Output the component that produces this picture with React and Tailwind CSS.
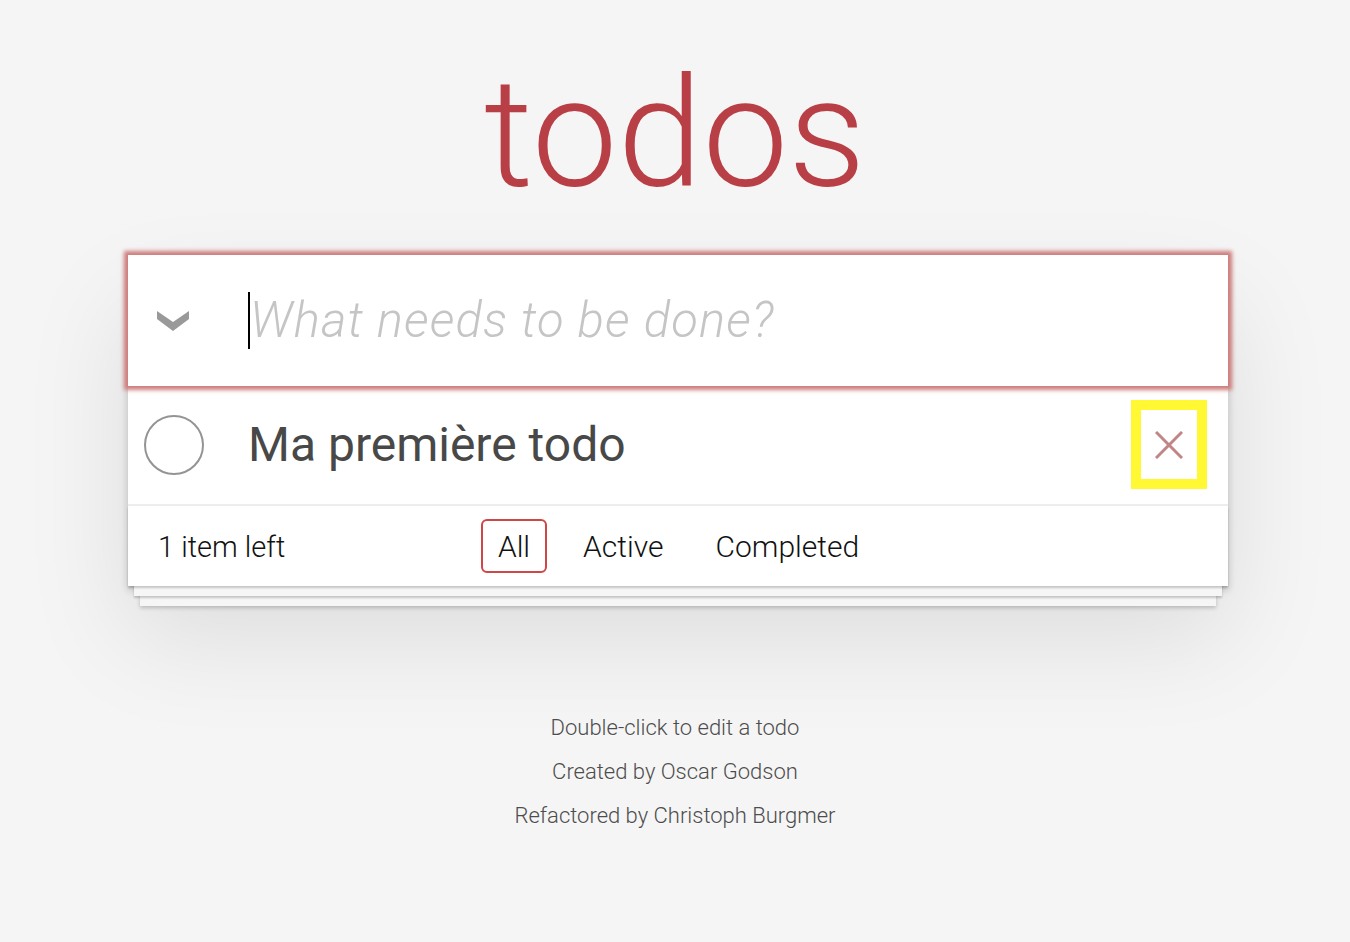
import React from "react";

function Chevron() {
    return (
        <svg width="32" height="20" viewBox="0 0 32 20">
            <polygon points="0,0 16,11 32,0 32,8 16,20 0,8" fill="#999999" />
        </svg>
    );
}

export default function App() {
    return (
        <div className="min-h-screen bg-[#f5f5f5] font-['Helvetica_Neue',Roboto,Arial,sans-serif] font-light text-[#111111]">
            {/* Titre */}
            <div className="pt-[57px]">
                <h1 className="h-[153px] text-center text-[153px] leading-none font-light text-[#b83f45]">todos</h1>
            </div>

            <section className="relative mt-[45px] ml-[128px] w-[1100px] bg-white shadow-[0_4px_8px_rgba(0,0,0,0.2),0_50px_100px_rgba(0,0,0,0.1)]">
                {/* Nouvelle tâche */}
                <header className="relative flex h-[131px] items-center shadow-[0_0_4px_4px_#cf7d7d]">
                    <div className="flex w-[120px] pl-[29px]">
                        <Chevron />
                    </div>
                    <div className="flex items-center">
                        <span className="h-[57px] w-[2px] bg-black" />
                        <span className="text-[49px] tracking-[1.1px] italic font-light text-[#c5c5c5]">What needs to be done?</span>
                    </div>
                </header>

                {/* Liste */}
                <ul>
                    <li className="relative flex h-[120px] items-center border-b-2 border-[#ededed]">
                        <div className="flex w-[120px] justify-center pr-[29px]">
                            <span className="h-[60px] w-[60px] rounded-full border-2 border-[#949494]" />
                        </div>
                        <span className="text-[48px] font-normal text-[#484848]">Ma première todo</span>
                        <div className="absolute right-[21px] top-[14px] flex h-[89px] w-[76px] items-center justify-center border-[10px] border-[#fff833]">
                            <svg width="28" height="28" viewBox="0 0 28 28">
                                <line x1="1" y1="1" x2="27" y2="27" stroke="#c18585" strokeWidth="3" />
                                <line x1="27" y1="1" x2="1" y2="27" stroke="#c18585" strokeWidth="3" />
                            </svg>
                        </div>
                    </li>
                </ul>

                {/* Pied */}
                <footer className="relative flex h-[80px] items-center bg-white px-[30px] pt-[3px] text-[30px] shadow-[0_2px_2px_rgba(0,0,0,0.2),0_16px_0_-6px_#f6f6f6,0_18px_2px_-6px_rgba(0,0,0,0.2),0_32px_0_-12px_#f6f6f6,0_34px_4px_-12px_rgba(0,0,0,0.2)]">
                    <span className="text-[29px]">1 item left</span>
                    <ul className="absolute inset-x-0 top-[13px] flex justify-center gap-[20px]">
                        <li className="rounded-[6px] border-2 border-[#ce4646] px-[15px] pt-[7px] pb-[6px] leading-[37px]">All</li>
                        <li className="rounded-[6px] border-2 border-transparent px-[14px] pt-[7px] pb-[6px] leading-[37px]">Active</li>
                        <li className="rounded-[6px] border-2 border-transparent px-[14px] pt-[7px] pb-[6px] leading-[37px]">Completed</li>
                    </ul>
                </footer>
            </section>

            {/* Infos */}
            <div className="mt-[120px] flex flex-col items-center text-[22px] text-[#4d4d4d] [text-shadow:0_1px_0_rgba(255,255,255,0.5)]">
                <p className="leading-[44px]">Double-click to edit a todo</p>
                <p className="leading-[44px]">Created by Oscar Godson</p>
                <p className="leading-[44px]">Refactored by Christoph Burgmer</p>
            </div>
        </div>
    );
}
